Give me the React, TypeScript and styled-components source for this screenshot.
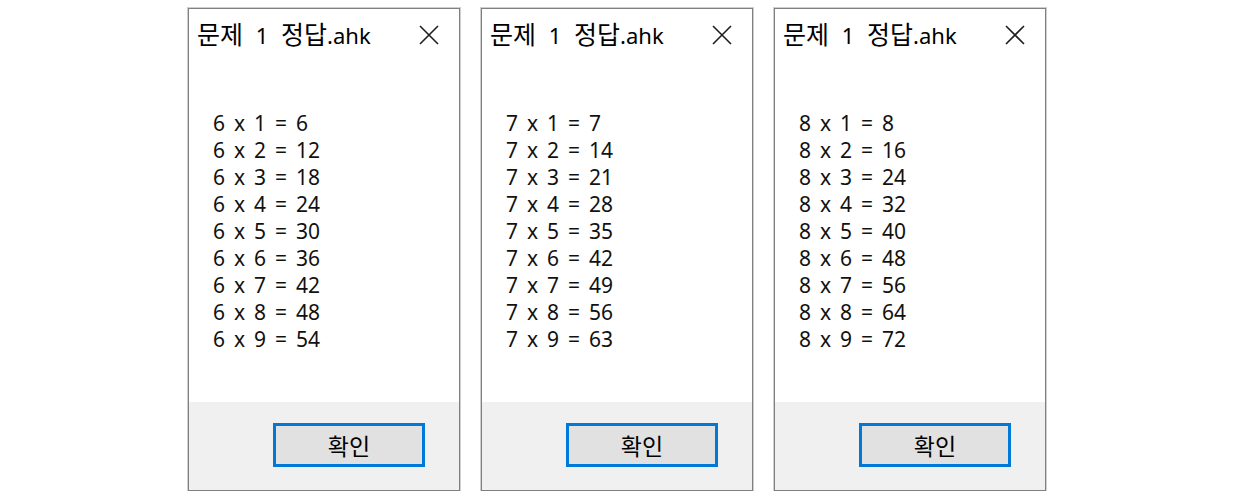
import React from 'react';
import styled, { createGlobalStyle } from 'styled-components';

const GlobalStyle = createGlobalStyle`
  html, body {
    margin: 0;
    padding: 0;
    background: #ffffff;
  }
  body {
    font-family: "Noto Sans", "Noto Sans CJK KR", sans-serif;
    color: #000;
  }
`;

const CloseIcon: React.FC = () => (
  <svg width="20" height="20" viewBox="0 0 20 20">
    <path d="M1 1 L19 19 M19 1 L1 19" stroke="#1e1e1e" strokeWidth="1.6" fill="none" />
  </svg>
);

interface BoxProps {
  dan: number;
}

const MessageBox: React.FC<BoxProps> = ({ dan }) => {
  const rows = [1, 2, 3, 4, 5, 6, 7, 8, 9];
  return (
    <Window>
      <TitleBar>
        <Title>
          <Hangul>문제</Hangul> 1 <Hangul>정답</Hangul>.ahk
        </Title>
        <CloseButton>
          <CloseIcon />
        </CloseButton>
      </TitleBar>
      <Body>
        {rows.map((n) => (
          <Line key={n}>{`${dan} x ${n} = ${dan * n}`}</Line>
        ))}
      </Body>
      <Footer>
        <OkButton>확인</OkButton>
      </Footer>
    </Window>
  );
};

const App: React.FC = () => {
  return (
    <React.Fragment>
      <GlobalStyle />
      <Page>
        <MessageBox dan={6} />
        <MessageBox dan={7} />
        <MessageBox dan={8} />
      </Page>
    </React.Fragment>
  );
};

export default App;

const Page = styled.div`
  display: flex;
  gap: 21px;
  padding: 8px 0 0 188px;
`

const Window = styled.div`
  width: 272px;
  height: 483px;
  box-sizing: border-box;
  border: 1px solid #808080;
  box-shadow: 0 0 0 1px #cfcfcf;
  background: #ffffff;
  display: flex;
  flex-direction: column;
`

const TitleBar = styled.div`
  height: 52px;
  display: flex;
  align-items: flex-start;
  justify-content: space-between;
  padding: 9px 20px 0 8px;
  box-sizing: border-box;
`

const Title = styled.div`
  font-size: 22px;
  line-height: 30px;
  word-spacing: 7px;
  white-space: nowrap;
`

const Hangul = styled.span`
  font-family: "Noto Sans CJK KR", sans-serif;
  font-size: 25px;
  word-spacing: 0;
`

const CloseButton = styled.div`
  width: 20px;
  height: 20px;
  margin-top: 7px;
  display: flex;
`

const Body = styled.div`
  flex: 1;
  padding: 49px 0 0 24px;
  display: flex;
  flex-direction: column;
`

const Line = styled.div`
  font-size: 21px;
  line-height: 27px;
  word-spacing: 3.5px;
  white-space: pre;
  color: #111;
`

const Footer = styled.div`
  height: 88px;
  background: #f0f0f0;
  display: flex;
  justify-content: flex-end;
  align-items: flex-start;
  padding: 21px 34px 0 0;
  box-sizing: border-box;
`

const OkButton = styled.button`
  width: 152px;
  height: 44px;
  margin: 0;
  padding: 0;
  border: 3px solid #0078d7;
  background: #e1e1e1;
  font-family: "Noto Sans CJK KR", "Noto Sans", sans-serif;
  font-size: 23px;
  color: #000;
  display: flex;
  align-items: center;
  justify-content: center;
`
